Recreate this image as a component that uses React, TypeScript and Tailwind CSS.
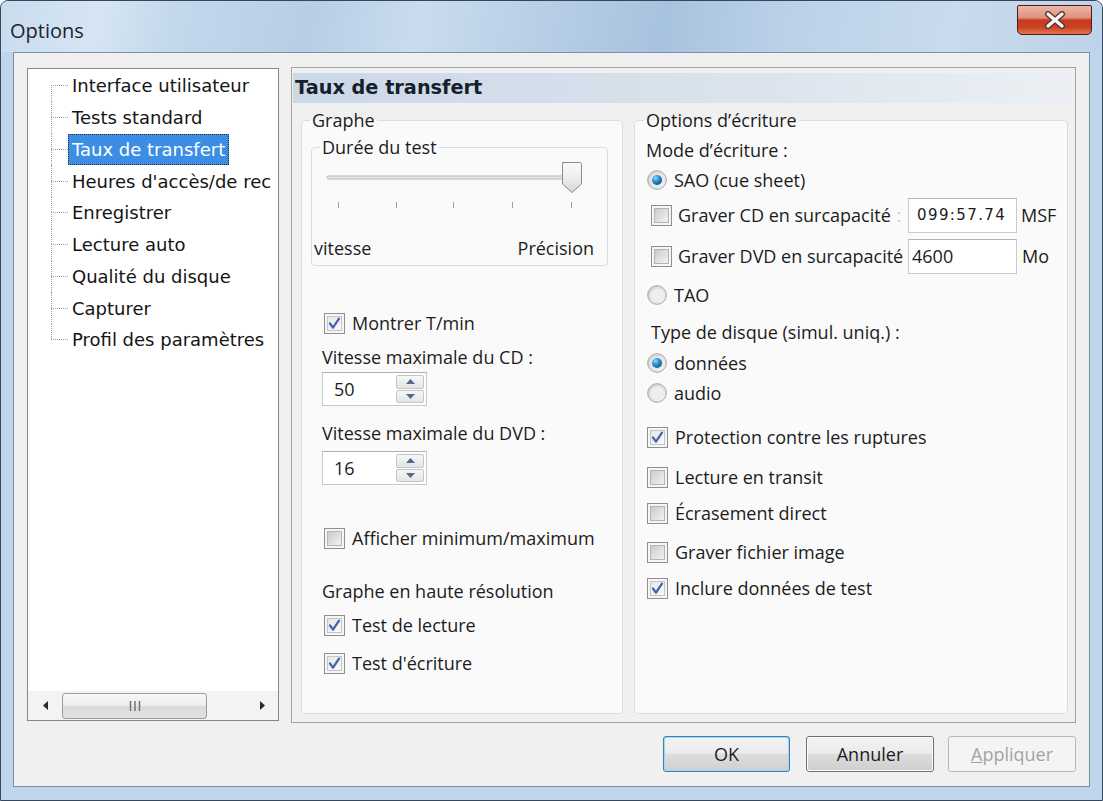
import React from 'react';

function Check({ checked }: { checked?: boolean }) {
  return (
    <svg width="21" height="21" viewBox="0 0 21 21" className="shrink-0">
      <defs>
        <linearGradient id="cbUn" x1="0" y1="0" x2="1" y2="1">
          <stop offset="0" stopColor="#c9c9c9" />
          <stop offset="1" stopColor="#f4f4f4" />
        </linearGradient>
        <linearGradient id="cbOn" x1="0" y1="0" x2="1" y2="1">
          <stop offset="0" stopColor="#e6e6e6" />
          <stop offset="1" stopColor="#fbfbfb" />
        </linearGradient>
      </defs>
      <rect x="0.5" y="0.5" width="20" height="20" fill="#f6f6f6" stroke="#8e8f8f" />
      <rect x="3.5" y="3.5" width="14" height="14" fill={checked ? 'url(#cbOn)' : 'url(#cbUn)'} stroke={checked ? '#c4c4c4' : '#b4b4b4'} />
      {checked && (
        <path d="M6 10.5 L9 14.6 L15 5.6" fill="none" stroke="#4565ab" strokeWidth="2.3" strokeLinecap="round" strokeLinejoin="round" />
      )}
    </svg>
  );
}

function Radio({ checked }: { checked?: boolean }) {
  return (
    <svg width="20" height="20" viewBox="0 0 20 20" className="shrink-0">
      <defs>
        <linearGradient id="rbg" x1="0" y1="0" x2="1" y2="1">
          <stop offset="0" stopColor="#cfcfcf" />
          <stop offset="1" stopColor="#f7f7f7" />
        </linearGradient>
        <radialGradient id="rdot" cx="0.35" cy="0.3" r="0.8">
          <stop offset="0" stopColor="#8fdcff" />
          <stop offset="0.45" stopColor="#2a92cf" />
          <stop offset="1" stopColor="#0b4f86" />
        </radialGradient>
      </defs>
      <circle cx="10" cy="10" r="9.3" fill="url(#rbg)" stroke="#a3a3a3" />
      <circle cx="10" cy="10" r="6.5" fill={checked ? '#e9e9e9' : '#eeeeee'} />
      {checked && <circle cx="10" cy="10" r="5" fill="url(#rdot)" />}
    </svg>
  );
}

function CheckRow({ checked, label, className }: { checked?: boolean; label: string; className: string }) {
  return (
    <div className={className}>
      <Check checked={checked} />
      <span className="whitespace-nowrap">{label}</span>
    </div>
  );
}

function SpinArrow({ up }: { up?: boolean }) {
  return (
    <div className="flex-1 rounded-[2px] border border-[#c2c6cc] bg-[linear-gradient(#f7f7f7,#e4e4e4)] flex items-center justify-center">
      <svg width="9" height="5" viewBox="0 0 9 5">
        {up ? <path d="M0 5 L4.5 0 L9 5 Z" fill="#4e6a92" /> : <path d="M0 0 L4.5 5 L9 0 Z" fill="#4e6a92" />}
      </svg>
    </div>
  );
}

function Spinner({ value, className }: { value: string; className: string }) {
  return (
    <div className={className}>
      <div className="w-[105px] h-[34px] border border-[#c8c8c8] border-t-[#b0b0b0] bg-white flex">
        <div className="flex-1 pl-[11px] flex items-center">{value}</div>
        <div className="w-[30px] flex flex-col py-[2px] pr-[2px] gap-[1px]">
          <SpinArrow up />
          <SpinArrow />
        </div>
      </div>
    </div>
  );
}

const treeItems = [
  'Interface utilisateur',
  'Tests standard',
  'Taux de transfert',
  "Heures d'accès/de rec",
  'Enregistrer',
  'Lecture auto',
  'Qualité du disque',
  'Capturer',
  'Profil des paramètres',
];

function Tree() {
  return (
    <div className="mt-[1px] w-[253px] h-[653px] border border-[#868686] bg-white flex flex-col font-[family-name:'DejaVu_Sans',sans-serif] text-[18px] text-[#141414]">
      <div className="flex-1 overflow-hidden pt-[1px]">
        {treeItems.map((t, i) => (
          <div key={t} className="h-[31.75px] flex items-stretch whitespace-nowrap">
            <div className="ml-[23px] w-[17px] shrink-0 flex flex-col">
              <div className={i > 0 ? 'flex-1 border-l border-dotted border-[#9c9c9c]' : 'flex-1'} />
              <div
                className={
                  i < treeItems.length - 1
                    ? 'flex-1 border-l border-t border-dotted border-[#9c9c9c]'
                    : 'flex-1 border-t border-dotted border-[#9c9c9c]'
                }
              />
            </div>
            <div className="flex items-center">
              {i === 2 ? (
                <span className="h-[31px] px-[3px] flex items-center bg-[#3b8ee4] text-white border border-dotted border-[#2b2b2b]">
                  {t}
                </span>
              ) : (
                <span className="h-[31px] px-[3px] flex items-center border border-transparent">{t}</span>
              )}
            </div>
          </div>
        ))}
      </div>
      <div className="h-[29px] bg-[#f3f3f3] flex items-center">
        <div className="w-[34px] h-full flex items-center justify-center">
          <svg width="5" height="9" viewBox="0 0 5 9">
            <path d="M5 0 L0 4.5 L5 9 Z" fill="#2a2a2a" />
          </svg>
        </div>
        <div className="w-[145px] h-[26px] rounded-[3px] border border-[#9d9d9d] bg-[linear-gradient(#f7f7f7,#ececec_50%,#dadada_52%,#e2e2e2)] flex items-center justify-center">
          <svg width="12" height="10" viewBox="0 0 12 10">
            <path d="M1.5 0 V10 M6 0 V10 M10.5 0 V10" stroke="#6b6b6b" strokeWidth="1.4" />
          </svg>
        </div>
        <div className="flex-1" />
        <div className="w-[31px] h-full flex items-center justify-center">
          <svg width="5" height="9" viewBox="0 0 5 9">
            <path d="M0 0 L5 4.5 L0 9 Z" fill="#2a2a2a" />
          </svg>
        </div>
      </div>
    </div>
  );
}

function Slider() {
  const ticks = [26, 84, 141, 200, 259];
  return (
    <svg width="294" height="56" viewBox="0 0 294 56" className="block">
      <defs>
        <linearGradient id="thumb" x1="0" y1="0" x2="0" y2="1">
          <stop offset="0" stopColor="#fbfbfb" />
          <stop offset="0.5" stopColor="#ededed" />
          <stop offset="1" stopColor="#d6d6d6" />
        </linearGradient>
      </defs>
      <rect x="15" y="19" width="242" height="3" rx="1" fill="#e4e4e4" stroke="#bcbcbc" strokeWidth="1" />
      {ticks.map((x) => (
        <rect key={x} x={x} y="45" width="1" height="6" fill="#a0a0a0" />
      ))}
      <path d="M250.5 5.5 H267.5 Q269.5 5.5 269.5 7.5 V27 L260 35.5 L250.5 27 V7.5 Q250.5 5.5 252.5 5.5 Z" fill="url(#thumb)" stroke="#8a8a8a" />
    </svg>
  );
}

function Btn({ label, variant }: { label: React.ReactNode; variant: 'ok' | 'normal' | 'disabled' }) {
  if (variant === 'disabled') {
    return (
      <div className="w-[128px] h-[36px] rounded-[3px] border border-[#b5b9bc] bg-[#f4f4f4] text-[#a3a3a3] flex items-center justify-center">
        {label}
      </div>
    );
  }
  if (variant === 'ok') {
    return (
      <div className="w-[127px] h-[36px] rounded-[3px] border border-[#3c7fb1] p-[1px] bg-[#9fd7f5]">
        <div className="w-full h-full rounded-[2px] bg-[linear-gradient(#f2f2f2,#ebebeb_48%,#dddddd_50%,#d1d1d1)] flex items-center justify-center">
          {label}
        </div>
      </div>
    );
  }
  return (
    <div className="w-[128px] h-[36px] rounded-[3px] border border-[#707070] p-[1px] bg-[#fbfbfb]">
      <div className="w-full h-full rounded-[2px] bg-[linear-gradient(#f2f2f2,#ebebeb_48%,#dddddd_50%,#cfcfcf)] flex items-center justify-center">
        {label}
      </div>
    </div>
  );
}

export default function App() {
  return (
    <div className="w-[1103px] h-[801px] bg-white font-[family-name:'Open_Sans',sans-serif] text-[18px] text-[#1c1c1c]">
      <div className="w-[1103px] h-[801px] rounded-t-[8px] border border-[#34475c] bg-[#bed5eb] flex flex-col overflow-hidden">
        {/* Title bar */}
        <div className="h-[51px] shrink-0 flex items-start justify-between pl-[9px] pr-[10px] bg-[linear-gradient(100deg,#c9dcee_0%,#d6e5f3_9%,#c3d8eb_16%,#b7cee6_28%,#cadcee_38%,#b3cbe4_52%,#a8c3df_60%,#bcd2e9_72%,#c9dbed_86%,#bdd3e9_100%)]">
          <div className="mt-[17px] text-[20px] leading-[26px] text-[#1a2433]">Options</div>
          <div className="mt-[4px] w-[75px] h-[30px] rounded-b-[5px] rounded-t-[2px] border border-[#4d1a12] bg-[linear-gradient(#edb7aa_0%,#e08f7b_42%,#c73b21_50%,#c9401f_75%,#e2774f_100%)] flex items-center justify-center">
            <svg width="22" height="18" viewBox="0 0 22 18">
              <path d="M4 3 L18 15 M18 3 L4 15" stroke="#5a342c" strokeWidth="6" strokeLinecap="round" />
              <path d="M4 3 L18 15 M18 3 L4 15" stroke="#f4f4f4" strokeWidth="3.4" strokeLinecap="round" />
            </svg>
          </div>
        </div>

        {/* Client area */}
        <div className="flex-1 mx-[12px] mb-[13px] border border-[#7b8ea2] bg-[#f0f0f0] flex flex-col">
          <div className="h-[670px] shrink-0 flex pl-[13px] pr-[13px] pt-[14px] gap-[12px]">
            <Tree />

            <div className="w-[785px] h-[656px] border border-[#a3a3a3] bg-[#f0f0f0] flex flex-col px-[1px] pt-[5px]">
              <div className="h-[30px] shrink-0 bg-[linear-gradient(to_right,#cbd8e6,#dbe4ee_60%,#ecf0f4)] font-[family-name:'DejaVu_Sans',sans-serif] font-bold text-[19.3px] pl-[2px] flex items-center text-[#15202c]">
                Taux de transfert
              </div>

              <div className="flex-1 flex pl-[8px] pr-[6px] pt-[7px] pb-[8px] gap-[11px]">
                {/* Graphe */}
                <fieldset className="w-[322px] m-0 p-0 min-w-0 border border-[#d5dfe5] rounded-[4px] bg-[#fafafa]">
                  <legend className="ml-[8px] px-[2px] h-[20px] leading-[20px]">Graphe</legend>
                  <div className="flex flex-col">
                    <fieldset className="mt-[7px] ml-[9px] mr-[14px] m-0 p-0 min-w-0 border border-[#d5dfe5] rounded-[4px]">
                      <legend className="ml-[8px] px-[2px] h-[20px] leading-[20px]">Durée du test</legend>
                      <div className="flex flex-col pb-[6px]">
                        <Slider />
                        <div className="mt-[24px] h-[22px] flex items-center justify-between pl-[2px] pr-[13px]">
                          <span>vitesse</span>
                          <span>Précision</span>
                        </div>
                      </div>
                    </fieldset>

                    <CheckRow checked label="Montrer T/min" className="mt-[45px] ml-[22px] h-[24px] flex items-center gap-[7px]" />
                    <div className="mt-[10px] ml-[20px] h-[24px] flex items-center">Vitesse maximale du CD :</div>
                    <Spinner value="50" className="mt-[3px] ml-[20px]" />
                    <div className="mt-[15px] ml-[20px] h-[24px] flex items-center">Vitesse maximale du DVD :</div>
                    <Spinner value="16" className="mt-[6px] ml-[20px]" />
                    <CheckRow label="Afficher minimum/maximum" className="mt-[41px] ml-[22px] h-[24px] flex items-center gap-[7px]" />
                    <div className="mt-[29px] ml-[20px] h-[24px] flex items-center">Graphe en haute résolution</div>
                    <CheckRow checked label="Test de lecture" className="mt-[10px] ml-[22px] h-[24px] flex items-center gap-[7px]" />
                    <CheckRow checked label="Test d'écriture" className="mt-[14px] ml-[22px] h-[24px] flex items-center gap-[7px]" />
                  </div>
                </fieldset>

                {/* Options d'écriture */}
                <fieldset className="w-[434px] m-0 p-0 min-w-0 border border-[#d5dfe5] rounded-[4px] bg-[#fafafa]">
                  <legend className="ml-[9px] px-[2px] h-[20px] leading-[20px]">Options d’écriture</legend>
                  <div className="flex flex-col">
                    <div className="mt-[8px] ml-[11px] h-[24px] flex items-center">Mode d’écriture :</div>
                    <div className="mt-[6px] ml-[12px] h-[24px] flex items-center gap-[7px]">
                      <Radio checked />
                      <span>SAO (cue sheet)</span>
                    </div>
                    <div className="mt-[6px] ml-[16px] h-[35px] flex items-center">
                      <div className="w-[257px] flex items-center gap-[6px] overflow-hidden whitespace-nowrap">
                        <Check />
                        <span>Graver CD en surcapacité</span>
                        <span className="text-[#cdcdcd]">:</span>
                      </div>
                      <div className="w-[109px] h-[35px] border border-[#cacaca] border-t-[#b3b3b3] bg-white flex items-center pl-[8px] font-[family-name:'DejaVu_Sans',sans-serif] text-[15px] tracking-[1.4px]">
                        099:57.74
                      </div>
                      <span className="ml-[4px]">MSF</span>
                    </div>
                    <div className="mt-[6px] ml-[16px] h-[35px] flex items-center">
                      <div className="w-[257px] flex items-center gap-[6px] overflow-hidden whitespace-nowrap">
                        <Check />
                        <span>Graver DVD en surcapacité</span>
                      </div>
                      <div className="w-[109px] h-[35px] border border-[#cacaca] border-t-[#b3b3b3] bg-white flex items-center pl-[3px]">
                        4600
                      </div>
                      <span className="ml-[5px]">Mo</span>
                    </div>
                    <div className="mt-[9px] ml-[12px] h-[24px] flex items-center gap-[7px]">
                      <Radio />
                      <span>TAO</span>
                    </div>
                    <div className="mt-[13px] ml-[16px] h-[24px] flex items-center">Type de disque (simul. uniq.) :</div>
                    <div className="mt-[7px] ml-[12px] h-[24px] flex items-center gap-[7px]">
                      <Radio checked />
                      <span>données</span>
                    </div>
                    <div className="mt-[6px] ml-[12px] h-[24px] flex items-center gap-[7px]">
                      <Radio />
                      <span>audio</span>
                    </div>
                    <CheckRow checked label="Protection contre les ruptures" className="mt-[20px] ml-[12px] h-[24px] flex items-center gap-[7px]" />
                    <CheckRow label="Lecture en transit" className="mt-[16px] ml-[12px] h-[24px] flex items-center gap-[7px]" />
                    <CheckRow label="Écrasement direct" className="mt-[12px] ml-[12px] h-[24px] flex items-center gap-[7px]" />
                    <CheckRow label="Graver fichier image" className="mt-[15px] ml-[12px] h-[24px] flex items-center gap-[7px]" />
                    <CheckRow checked label="Inclure données de test" className="mt-[12px] ml-[12px] h-[24px] flex items-center gap-[7px]" />
                  </div>
                </fieldset>
              </div>
            </div>
          </div>

          {/* Buttons */}
          <div className="flex-1 flex items-start justify-end pt-[13px] pr-[13px]">
            <Btn label="OK" variant="ok" />
            <div className="w-[16px]" />
            <Btn label="Annuler" variant="normal" />
            <div className="w-[14px]" />
            <Btn
              label={
                <span>
                  <span className="underline">A</span>ppliquer
                </span>
              }
              variant="disabled"
            />
          </div>
        </div>
      </div>
    </div>
  );
}
